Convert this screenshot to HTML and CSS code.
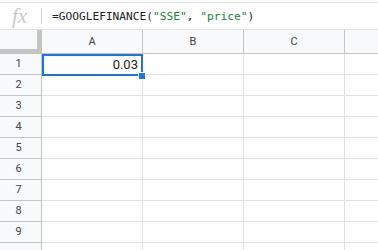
FILE: index.html
```html
<!DOCTYPE html>
<html>
<head>
<meta charset="utf-8">
<link rel="stylesheet" href="styles.css">
</head>
<body>
<div class="fbar">
  <div class="fx">fx</div>
  <div class="sep"></div>
  <div class="formula">=GOOGLEFINANCE(<span class="str">"SSE"</span>, <span class="str">"price"</span>)</div>
</div>
<div class="grid">
  <div class="corner"></div>
  <div class="ch">A</div>
  <div class="ch">B</div>
  <div class="ch">C</div>
  <div class="ch last"></div>

  <div class="rh">1</div>
  <div class="c sel"><span class="val">0.03</span><div class="selbox"></div><div class="handle"></div></div>
  <div class="c"></div><div class="c"></div><div class="c last"></div>

  <div class="rh">2</div><div class="c"></div><div class="c"></div><div class="c"></div><div class="c last"></div>
  <div class="rh">3</div><div class="c"></div><div class="c"></div><div class="c"></div><div class="c last"></div>
  <div class="rh">4</div><div class="c"></div><div class="c"></div><div class="c"></div><div class="c last"></div>
  <div class="rh">5</div><div class="c"></div><div class="c"></div><div class="c"></div><div class="c last"></div>
  <div class="rh">6</div><div class="c"></div><div class="c"></div><div class="c"></div><div class="c last"></div>
  <div class="rh">7</div><div class="c"></div><div class="c"></div><div class="c"></div><div class="c last"></div>
  <div class="rh">8</div><div class="c"></div><div class="c"></div><div class="c"></div><div class="c last"></div>
  <div class="rh">9</div><div class="c"></div><div class="c"></div><div class="c"></div><div class="c last"></div>
  <div class="rh"></div><div class="c"></div><div class="c"></div><div class="c"></div><div class="c last"></div>
</div>
</body>
</html>
```
FILE: styles.css
```css
html, body {
  margin: 0;
  padding: 0;
  background: #fff;
  overflow: hidden;
  width: 378px;
  height: 250px;
}
.fbar {
  margin-top: 2px;
  height: 28px;
  box-sizing: border-box;
  border-top: 1px solid #e2e2e2;
  border-bottom: 1px solid #e2e2e2;
  display: flex;
  align-items: center;
}
.fx {
  flex: 0 0 29px;
  font-family: "Liberation Serif", serif;
  font-style: italic;
  font-size: 21px;
  color: #c8c8c8;
  margin-left: 12px;
  line-height: 26px;
}
.sep {
  flex: 0 0 1px;
  height: 16px;
  background: #d0d0d0;
}
.formula {
  flex: 0 0 auto;
  margin-left: 10px;
  font-family: "DejaVu Sans Mono", monospace;
  font-size: 11.2px;
  color: #222;
  padding-top: 1px;
  white-space: nowrap;
}
.str {
  color: #188038;
}
.grid {
  display: grid;
  grid-template-columns: 42px 101px 101px 101px 1fr;
  grid-template-rows: 24px repeat(10, 21px);
  font-family: Roboto, "Liberation Sans", sans-serif;
}
.grid > div {
  box-sizing: border-box;
}
.corner {
  background: #f8f9fa;
  border-right: 5px solid #c4c4c4;
  border-bottom: 5px solid #c4c4c4;
}
.ch {
  background: #f8f9fa;
  border-right: 1px solid #c4c4c4;
  border-bottom: 1px solid #c4c4c4;
  font-size: 11px;
  color: #444;
  text-align: center;
  line-height: 23px;
}
.ch.last {
  border-right: none;
}
.rh {
  background: #f8f9fa;
  border-right: 1px solid #c4c4c4;
  border-bottom: 1px solid #c4c4c4;
  font-size: 11px;
  color: #444;
  text-align: center;
  padding-right: 4px;
  line-height: 20px;
}
.c {
  border-right: 1px solid #e2e2e2;
  border-bottom: 1px solid #e2e2e2;
}
.c.last {
  border-right: none;
}
.sel {
  position: relative;
  text-align: right;
  padding-right: 4px;
  font-size: 13px;
  color: #222;
  line-height: 21px;
}
.selbox {
  position: absolute;
  left: 0;
  top: 0;
  width: 101px;
  height: 22px;
  box-sizing: border-box;
  border: 2px solid #1a73e8;
}
.handle {
  position: absolute;
  left: 96px;
  top: 18px;
  width: 6px;
  height: 6px;
  background: #1a73e8;
  border: 1px solid #fff;
}
```
